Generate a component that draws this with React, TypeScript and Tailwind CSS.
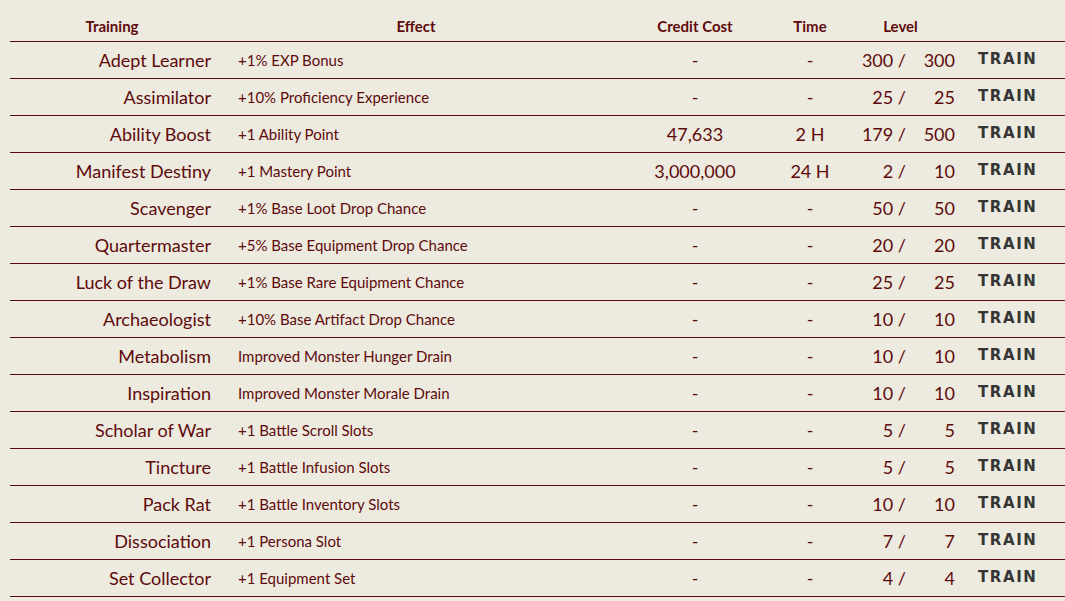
import React from "react";

type Row = { name: string; effect: string; cost: string; time: string; cur: string; max: string };

const rows: Row[] = [
  { name: "Adept Learner", effect: "+1% EXP Bonus", cost: "-", time: "-", cur: "300", max: "300" },
  { name: "Assimilator", effect: "+10% Proficiency Experience", cost: "-", time: "-", cur: "25", max: "25" },
  { name: "Ability Boost", effect: "+1 Ability Point", cost: "47,633", time: "2 H", cur: "179", max: "500" },
  { name: "Manifest Destiny", effect: "+1 Mastery Point", cost: "3,000,000", time: "24 H", cur: "2", max: "10" },
  { name: "Scavenger", effect: "+1% Base Loot Drop Chance", cost: "-", time: "-", cur: "50", max: "50" },
  { name: "Quartermaster", effect: "+5% Base Equipment Drop Chance", cost: "-", time: "-", cur: "20", max: "20" },
  { name: "Luck of the Draw", effect: "+1% Base Rare Equipment Chance", cost: "-", time: "-", cur: "25", max: "25" },
  { name: "Archaeologist", effect: "+10% Base Artifact Drop Chance", cost: "-", time: "-", cur: "10", max: "10" },
  { name: "Metabolism", effect: "Improved Monster Hunger Drain", cost: "-", time: "-", cur: "10", max: "10" },
  { name: "Inspiration", effect: "Improved Monster Morale Drain", cost: "-", time: "-", cur: "10", max: "10" },
  { name: "Scholar of War", effect: "+1 Battle Scroll Slots", cost: "-", time: "-", cur: "5", max: "5" },
  { name: "Tincture", effect: "+1 Battle Infusion Slots", cost: "-", time: "-", cur: "5", max: "5" },
  { name: "Pack Rat", effect: "+1 Battle Inventory Slots", cost: "-", time: "-", cur: "10", max: "10" },
  { name: "Dissociation", effect: "+1 Persona Slot", cost: "-", time: "-", cur: "7", max: "7" },
  { name: "Set Collector", effect: "+1 Equipment Set", cost: "-", time: "-", cur: "4", max: "4" },
];

const grid = "grid grid-cols-[204px_404px_154px_76px_60px_50px_1fr]";

export default function App() {
  return (
    <div className="min-h-[601px] w-[1065px] bg-[#edeae0] pl-[10px] text-[#5e0b0b]" style={{ fontFamily: "Lato, 'Open Sans', sans-serif" }}>
      <div className={`${grid} h-[42px] items-end border-b border-[#5a0a0a] pb-[4px] text-[15px] font-bold`}>
        <div className="text-center">Training</div>
        <div className="text-center">Effect</div>
        <div className="text-center">Credit Cost</div>
        <div className="text-center">Time</div>
        <div className="col-span-2 pr-[5px] text-center">Level</div>
        <div />
      </div>
      {rows.map((r) => (
        <div key={r.name} className={`${grid} h-[37px] items-center border-b border-[#5a0a0a]`}>
          <div className="pr-[3px] text-right text-[18px]">{r.name}</div>
          <div className="pl-[24px] text-[15px]">{r.effect}</div>
          <div className="text-center text-[18px]">{r.cost}</div>
          <div className="text-center text-[18px]">{r.time}</div>
          <div className="pr-[2px] text-right text-[18px]">{r.cur} /</div>
          <div className="pr-[3px] text-right text-[18px]">{r.max}</div>
          <div className="pb-[4px] pl-[20px]">
            <span
              className="text-[15px] font-bold tracking-[1.6px] text-[#353535]"
              style={{ fontFamily: "'DejaVu Sans', sans-serif" }}
            >
              TRAIN
            </span>
          </div>
        </div>
      ))}
    </div>
  );
}
